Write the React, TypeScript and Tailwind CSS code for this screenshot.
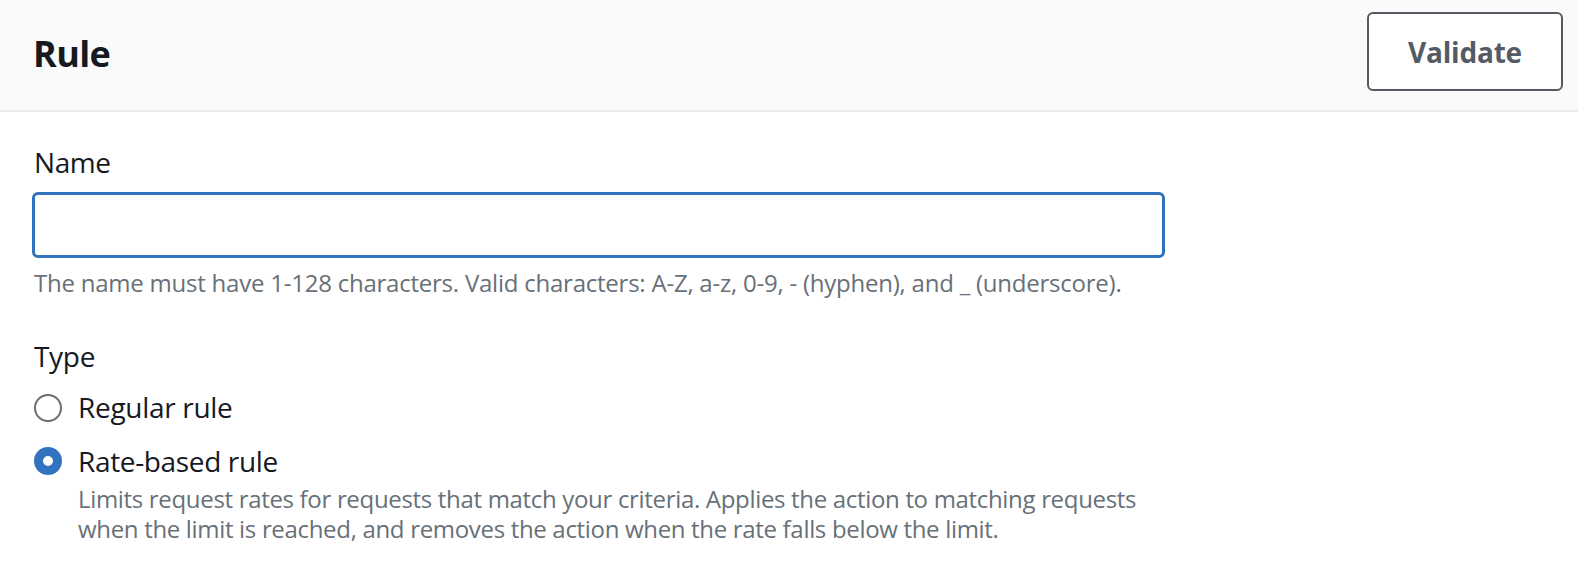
import React from "react";

export default function App() {
  return (
    <div className="w-[1578px] h-[578px] bg-white overflow-hidden text-[#16191f]" style={{ fontFamily: '"Open Sans", "Liberation Sans", sans-serif' }}>
      <div className="h-[112px] bg-[#fafafa] border-b-2 border-[#eaeded] flex items-center justify-between pl-[33px] pr-[15px]">
        <h1 className="text-[36px] font-bold leading-[44px] mt-[-2px] tracking-[-0.6px]">Rule</h1>
        <button className="w-[196px] h-[79px] border-2 border-[#545b64] rounded-[6px] bg-white text-[#545b64] text-[28px] font-bold leading-none mt-[-7px] tracking-[-0.2px]">
          Validate
        </button>
      </div>
      <div className="pl-[32px] pt-[32px]">
        <div className="text-[28px] leading-[36px] pl-[2px] tracking-[-0.4px]">Name</div>
        <div className="mt-[12px] w-[1133px] h-[66px] border-[3px] border-[#3273c0] rounded-[6px]"></div>
        <div className="mt-[9px] text-[24px] leading-[32px] text-[#687078] pl-[2px] tracking-[-0.23px]">
          The name must have 1-128 characters. Valid characters: A-Z, a-z, 0-9, - (hyphen), and _ (underscore).
        </div>
        <div className="mt-[39px] text-[28px] leading-[36px] pl-[2px] tracking-[-0.3px]">Type</div>
        <div className="mt-[16px] flex items-center gap-[16px] pl-[2px]">
          <span className="w-[28px] h-[28px] rounded-full border-2 border-[#687078] bg-white shrink-0 mt-[2px]"></span>
          <span className="text-[28px] leading-[34px] tracking-[-0.3px]">Regular rule</span>
        </div>
        <div className="mt-[20px] flex items-center gap-[16px] pl-[2px]">
          <span className="w-[28px] h-[28px] rounded-full border-[9px] border-[#3273c0] bg-white shrink-0"></span>
          <span className="text-[28px] leading-[34px] tracking-[-0.35px]">Rate-based rule</span>
        </div>
        <div className="mt-[6px] pl-[46px] text-[24px] leading-[30px] text-[#687078] tracking-[-0.32px]">
          Limits request rates for requests that match your criteria. Applies the action to matching requests
          <br />
          when the limit is reached, and removes the action when the rate falls below the limit.
        </div>
      </div>
    </div>
  );
}
